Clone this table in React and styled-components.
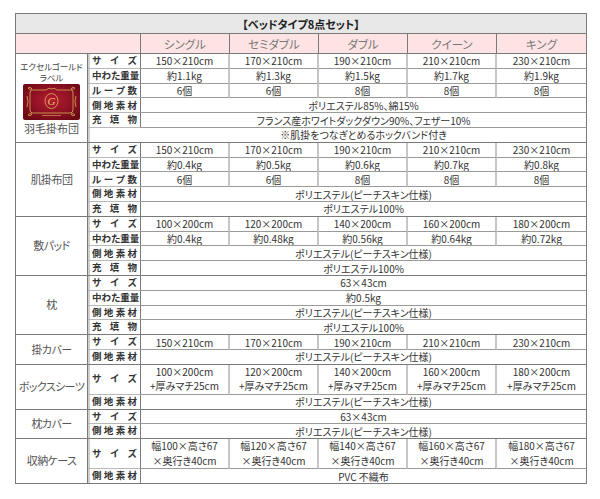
import styled, { createGlobalStyle } from 'styled-components';

const GlobalStyle = createGlobalStyle`
  html, body {
    margin: 0;
    padding: 0;
    background: #ffffff;
  }
`;

const Page = styled.div`
  padding: 13px 0 0 15px;
  width: 600px;
  height: 499px;
  box-sizing: border-box;
  overflow: hidden;
`;

const Table = styled.table`
  border-collapse: separate;
  border-spacing: 0;
  table-layout: fixed;
  width: 572px;
  border-top: 1px solid #7a7a7a;
  border-left: 1px solid #7a7a7a;
  font-family: "Noto Sans CJK JP", "Noto Sans", sans-serif;
  font-feature-settings: "palt";
`;

const Row = styled.tr`
  height: ${props => props.$h}px;
`;

const Cell = styled.td`
  padding: 0;
  border-right: 1px solid #7a7a7a;
  border-bottom: 1px solid #7a7a7a;
  text-align: center;
  vertical-align: middle;
  white-space: nowrap;
  overflow: hidden;
`;

const TitleCell = styled(Cell)`
  background: #e8e8e8;
  font-size: 11px;
  font-weight: 700;
  color: #222;
`;

const HeadCell = styled(Cell)`
  background: #fde3e3;
  font-size: 11.5px;
  color: #777;
`;

const CategoryCell = styled(Cell)`
  font-size: 11px;
  letter-spacing: -0.6px;
  color: #555;
  line-height: 1.2;
`;

const LabelCell = styled(Cell)`
  box-shadow: inset 2px 0 0 #cfcfcf;
  border-right: ${props => (props.$blank ? 'none' : '1px solid #7a7a7a')};
  border-bottom: ${props => (props.$end ? '1px solid #7a7a7a' : '1px solid #b8b8b8')};
`;

const LabelText = styled.div`
  display: flex;
  justify-content: space-between;
  padding: 0 3px 0 4px;
  font-size: 9.5px;
  font-weight: 700;
  color: #333;
  line-height: 1;
`;

const ValueCell = styled(Cell)`
  font-size: 10px;
  color: #333;
  line-height: 13px;
  border-right: ${props => (props.$sep ? '2px solid #c6c6c6' : '1px solid #7a7a7a')};
  border-bottom: ${props => (props.$end ? '1px solid #7a7a7a' : '1px solid #9a9a9a')};
`;

const ValueLine = styled.div`
  line-height: 14.5px;
`;

const GoldBox = styled.div`
  display: flex;
  flex-direction: column;
  align-items: center;
  letter-spacing: 0;
`;

const GoldTitle = styled.div`
  font-size: 8.5px;
  line-height: 11px;
  color: #444;
`;

const Emblem = styled.svg`
  display: block;
  margin: 1px 0 2px;
`;

const SIZES = ['シングル', 'セミダブル', 'ダブル', 'クイーン', 'キング'];
const PEACH = 'ポリエステル(ピーチスキン仕様)';

const groups = [
  {
    name: '羽毛掛布団',
    gold: true,
    rows: [
      { label: 'サイズ', values: ['150×210cm', '170×210cm', '190×210cm', '210×210cm', '230×210cm'] },
      { label: '中わた重量', values: ['約1.1kg', '約1.3kg', '約1.5kg', '約1.7kg', '約1.9kg'] },
      { label: 'ループ数', values: ['6個', '6個', '8個', '8個', '8個'] },
      { label: '側地素材', span: 'ポリエステル85%、綿15%' },
      { label: '充填物', span: 'フランス産ホワイトダックダウン90%、フェザー10%' },
      { note: '※肌掛をつなぎとめるホックバンド付き' },
    ],
  },
  {
    name: '肌掛布団',
    rows: [
      { label: 'サイズ', values: ['150×210cm', '170×210cm', '190×210cm', '210×210cm', '230×210cm'] },
      { label: '中わた重量', values: ['約0.4kg', '約0.5kg', '約0.6kg', '約0.7kg', '約0.8kg'] },
      { label: 'ループ数', values: ['6個', '6個', '8個', '8個', '8個'] },
      { label: '側地素材', span: PEACH },
      { label: '充填物', span: 'ポリエステル100%' },
    ],
  },
  {
    name: '敷パッド',
    rows: [
      { label: 'サイズ', values: ['100×200cm', '120×200cm', '140×200cm', '160×200cm', '180×200cm'] },
      { label: '中わた重量', values: ['約0.4kg', '約0.48kg', '約0.56kg', '約0.64kg', '約0.72kg'] },
      { label: '側地素材', span: PEACH },
      { label: '充填物', span: 'ポリエステル100%' },
    ],
  },
  {
    name: '枕',
    rows: [
      { label: 'サイズ', span: '63×43cm' },
      { label: '中わた重量', span: '約0.5kg' },
      { label: '側地素材', span: PEACH },
      { label: '充填物', span: 'ポリエステル100%' },
    ],
  },
  {
    name: '掛カバー',
    rows: [
      { label: 'サイズ', values: ['150×210cm', '170×210cm', '190×210cm', '210×210cm', '230×210cm'] },
      { label: '側地素材', span: PEACH },
    ],
  },
  {
    name: 'ボックスシーツ',
    rows: [
      {
        label: 'サイズ',
        tall: true,
        values: [100, 120, 140, 160, 180].map(w => [`${w}×200cm`, '+厚みマチ25cm']),
      },
      { label: '側地素材', span: PEACH },
    ],
  },
  {
    name: '枕カバー',
    rows: [
      { label: 'サイズ', span: '63×43cm' },
      { label: '側地素材', span: PEACH },
    ],
  },
  {
    name: '収納ケース',
    rows: [
      {
        label: 'サイズ',
        tall: true,
        values: [100, 120, 140, 160, 180].map(w => [`幅${w}×高さ67`, '×奥行き40cm']),
      },
      { label: '側地素材', span: 'PVC 不織布' },
    ],
  },
];

const GoldEmblem = () => (
  <Emblem width="57" height="36" viewBox="0 0 57 36">
    <defs>
      <radialGradient id="redGrad" cx="50%" cy="45%" r="65%">
        <stop offset="0" stopColor="#b81c32" />
        <stop offset="1" stopColor="#6a0815" />
      </radialGradient>
    </defs>
    <rect x="0" y="0" width="57" height="36" rx="2" fill="url(#redGrad)" />
    <g fill="none" stroke="#d8b25a" strokeWidth="0.8">
      <path d="M9 6 H23 Q26 3 28.5 5 Q31 3 34 6 H48 Q50 6 50 9 V26 Q50 29 47 29 H10 Q7 29 7 26 V9 Q7 6 9 6 Z" />
      <path d="M5 4 Q8 2 9 5 Q6 6 5 4 Z M52 4 Q49 2 48 5 Q51 6 52 4 Z M5 31 Q8 33 9 30 Q6 29 5 31 Z M52 31 Q49 33 48 30 Q51 29 52 31 Z" />
      <path d="M4 12 Q6 17.5 4 23 M53 12 Q51 17.5 53 23" />
      <ellipse cx="28.5" cy="17" rx="6.5" ry="7.5" />
    </g>
    <text x="28.5" y="21" textAnchor="middle" fontSize="11" fontStyle="italic" fontFamily="Liberation Serif, serif" fill="#e2c06a">G</text>
    <rect x="19" y="31" width="19" height="1" fill="#d8b25a" opacity="0.6" />
  </Emblem>
);

const Label = ({ text }) => (
  <LabelText>
    {text.split('').map((ch, i) => (
      <span key={i}>{ch}</span>
    ))}
  </LabelText>
);

const App = () => {
  return (
    <Page>
      <GlobalStyle />
      <Table>
        <colgroup>
          <col style={{ width: 72 }} />
          <col style={{ width: 53 }} />
          <col style={{ width: 89 }} />
          <col style={{ width: 89 }} />
          <col style={{ width: 89 }} />
          <col style={{ width: 89 }} />
          <col style={{ width: 90 }} />
        </colgroup>
        <tbody>
          <Row $h={20}>
            <TitleCell colSpan={7}>【ベッドタイプ8点セット】</TitleCell>
          </Row>
          <Row $h={20}>
            <HeadCell colSpan={2} />
            {SIZES.map(s => (
              <HeadCell key={s}>{s}</HeadCell>
            ))}
          </Row>
          {groups.map(g =>
            g.rows.map((r, i) => {
              const end = i === g.rows.length - 1;
              return (
                <Row key={g.name + i} $h={r.tall ? 30 : 14.8}>
                  {i === 0 && (
                    <CategoryCell rowSpan={g.rows.length}>
                      {g.gold ? (
                        <GoldBox>
                          <GoldTitle>エクセルゴールド</GoldTitle>
                          <GoldTitle>ラベル</GoldTitle>
                          <GoldEmblem />
                          <div>{g.name}</div>
                        </GoldBox>
                      ) : (
                        g.name
                      )}
                    </CategoryCell>
                  )}
                  {r.note ? (
                    <>
                      <LabelCell $blank $end={end} />
                      <ValueCell colSpan={5} $end={end}>{r.note}</ValueCell>
                    </>
                  ) : (
                    <>
                      <LabelCell $end={end}>
                        <Label text={r.label} />
                      </LabelCell>
                      {r.span ? (
                        <ValueCell colSpan={5} $end={end}>{r.span}</ValueCell>
                      ) : (
                        r.values.map((v, j) => (
                          <ValueCell key={j} $sep={j < 4} $end={end}>
                            {Array.isArray(v)
                              ? v.map(line => <ValueLine key={line}>{line}</ValueLine>)
                              : v}
                          </ValueCell>
                        ))
                      )}
                    </>
                  )}
                </Row>
              );
            })
          )}
        </tbody>
      </Table>
    </Page>
  );
};

export default App;
